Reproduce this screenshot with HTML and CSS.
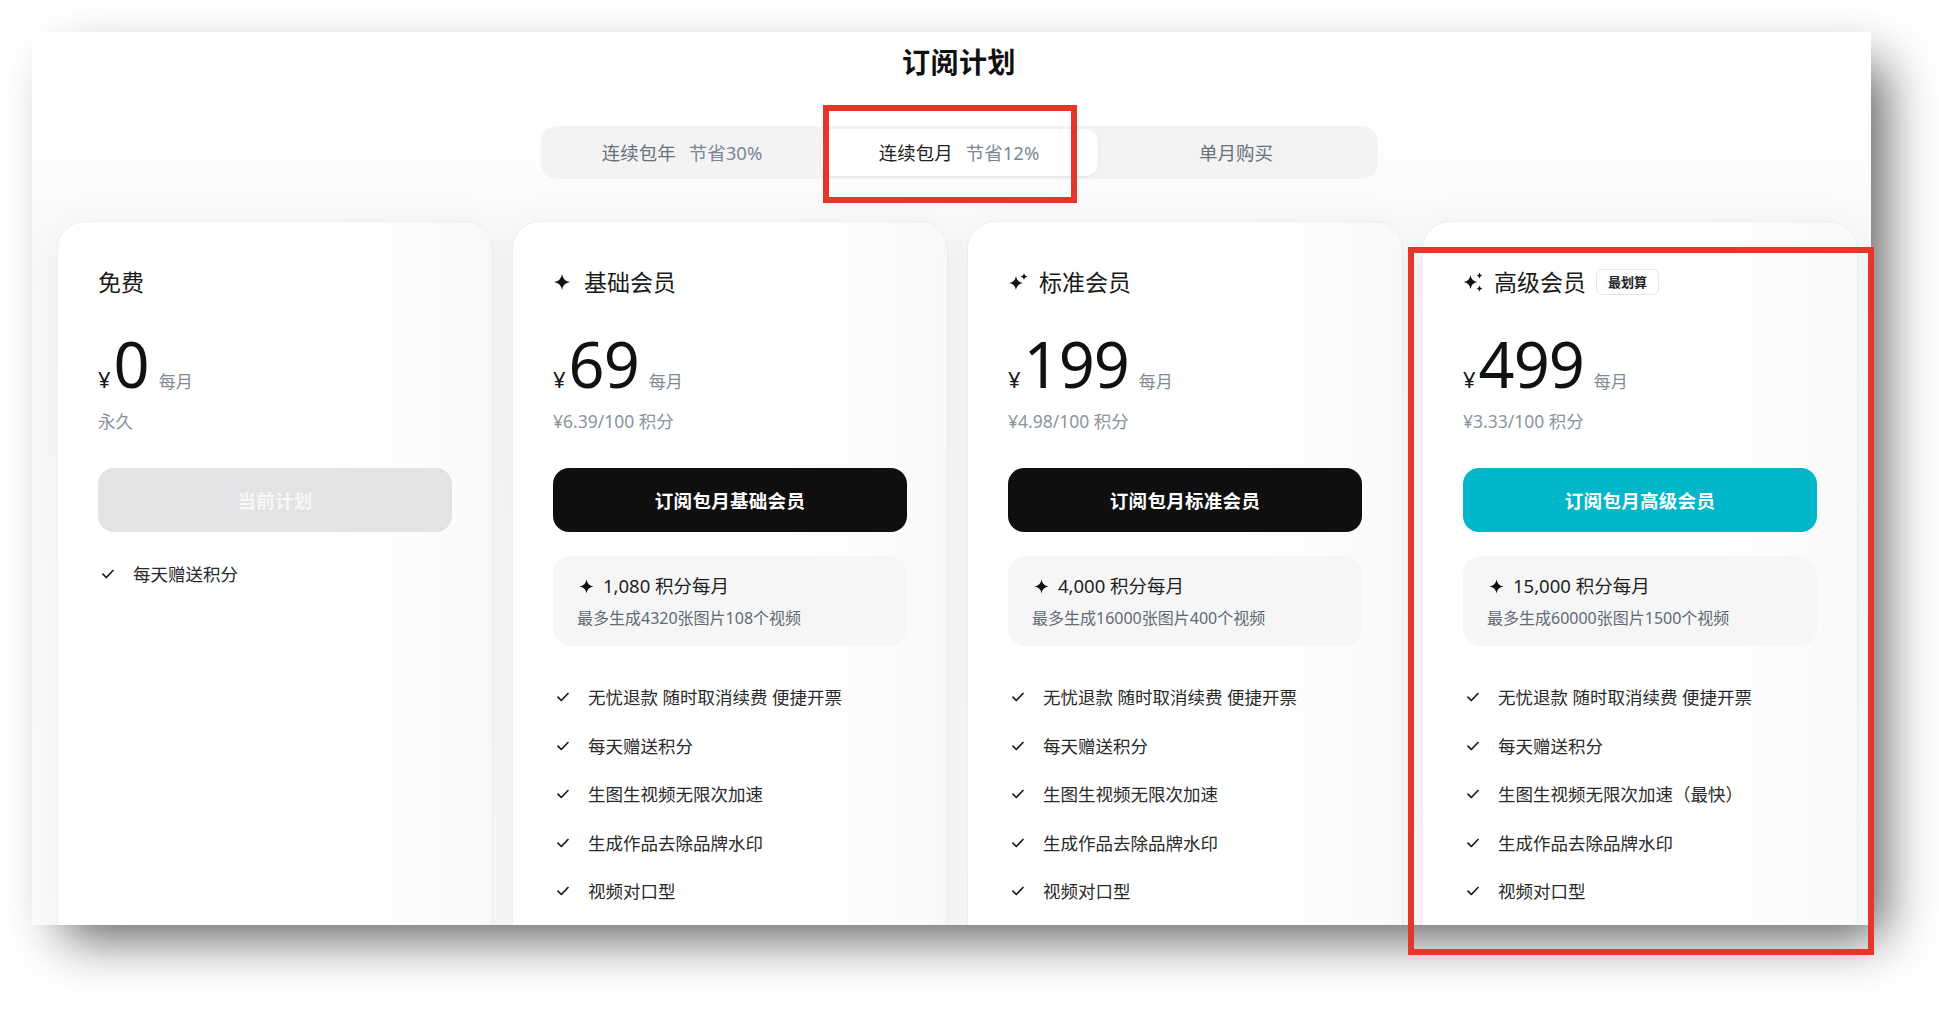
FILE: index.html
```html
<!DOCTYPE html>
<html lang="zh-CN">
<head>
<meta charset="utf-8">
<title>订阅计划</title>
<link rel="stylesheet" href="styles.css">
</head>
<body>
<div class="panel">
  <h1 class="title">订阅计划</h1>
  <div class="tabs">
    <div class="tab"><span class="tab-name">连续包年</span><span class="tab-save">节省30%</span></div>
    <div class="tab active"><span class="tab-name">连续包月</span><span class="tab-save">节省12%</span></div>
    <div class="tab"><span class="tab-name">单月购买</span></div>
  </div>

  <div class="cards">
    <div class="card">
      <div class="plan-head"><span class="plan-name">免费</span></div>
      <div class="price"><span class="cur">¥</span><span class="amount">0</span><span class="per">每月</span></div>
      <div class="unit">永久</div>
      <button class="btn btn-disabled">当前计划</button>
      <ul class="features features-free">
        <li><svg class="check" viewBox="0 0 12 10"><path d="M1 5.2 L4.3 8.5 L11 1.5"/></svg><span>每天赠送积分</span></li>
      </ul>
    </div>

    <div class="card">
      <div class="plan-head">
        <svg class="plan-icon" viewBox="0 0 20 20"><path d="M9 2 Q10 9 17 10 Q10 11 9 18 Q8 11 1 10 Q8 9 9 2Z"/></svg>
        <span class="plan-name">基础会员</span>
      </div>
      <div class="price"><span class="cur">¥</span><span class="amount">69</span><span class="per">每月</span></div>
      <div class="unit">¥6.39/100 积分</div>
      <button class="btn btn-dark">订阅包月基础会员</button>
      <div class="credits">
        <div class="credits-main"><svg class="credit-icon" viewBox="0 0 16 16"><path d="M8 0.5 Q8.9 7.1 15.5 8 Q8.9 8.9 8 15.5 Q7.1 8.9 0.5 8 Q7.1 7.1 8 0.5Z"/></svg><span>1,080 积分每月</span></div>
        <div class="credits-sub">最多生成4320张图片108个视频</div>
      </div>
      <ul class="features">
        <li><svg class="check" viewBox="0 0 12 10"><path d="M1 5.2 L4.3 8.5 L11 1.5"/></svg><span>无忧退款 随时取消续费 便捷开票</span></li>
        <li><svg class="check" viewBox="0 0 12 10"><path d="M1 5.2 L4.3 8.5 L11 1.5"/></svg><span>每天赠送积分</span></li>
        <li><svg class="check" viewBox="0 0 12 10"><path d="M1 5.2 L4.3 8.5 L11 1.5"/></svg><span>生图生视频无限次加速</span></li>
        <li><svg class="check" viewBox="0 0 12 10"><path d="M1 5.2 L4.3 8.5 L11 1.5"/></svg><span>生成作品去除品牌水印</span></li>
        <li><svg class="check" viewBox="0 0 12 10"><path d="M1 5.2 L4.3 8.5 L11 1.5"/></svg><span>视频对口型</span></li>
      </ul>
    </div>

    <div class="card">
      <div class="plan-head">
        <svg class="plan-icon" viewBox="0 0 20 20"><path d="M8 4 Q8.9 10.1 15 11 Q8.9 11.9 8 18 Q7.1 11.9 1 11 Q7.1 10.1 8 4Z"/><path d="M16 1 Q16.5 4 19.5 4.5 Q16.5 5 16 8 Q15.5 5 12.5 4.5 Q15.5 4 16 1Z"/></svg>
        <span class="plan-name">标准会员</span>
      </div>
      <div class="price"><span class="cur">¥</span><span class="amount">199</span><span class="per">每月</span></div>
      <div class="unit">¥4.98/100 积分</div>
      <button class="btn btn-dark">订阅包月标准会员</button>
      <div class="credits">
        <div class="credits-main"><svg class="credit-icon" viewBox="0 0 16 16"><path d="M8 0.5 Q8.9 7.1 15.5 8 Q8.9 8.9 8 15.5 Q7.1 8.9 0.5 8 Q7.1 7.1 8 0.5Z"/></svg><span>4,000 积分每月</span></div>
        <div class="credits-sub">最多生成16000张图片400个视频</div>
      </div>
      <ul class="features">
        <li><svg class="check" viewBox="0 0 12 10"><path d="M1 5.2 L4.3 8.5 L11 1.5"/></svg><span>无忧退款 随时取消续费 便捷开票</span></li>
        <li><svg class="check" viewBox="0 0 12 10"><path d="M1 5.2 L4.3 8.5 L11 1.5"/></svg><span>每天赠送积分</span></li>
        <li><svg class="check" viewBox="0 0 12 10"><path d="M1 5.2 L4.3 8.5 L11 1.5"/></svg><span>生图生视频无限次加速</span></li>
        <li><svg class="check" viewBox="0 0 12 10"><path d="M1 5.2 L4.3 8.5 L11 1.5"/></svg><span>生成作品去除品牌水印</span></li>
        <li><svg class="check" viewBox="0 0 12 10"><path d="M1 5.2 L4.3 8.5 L11 1.5"/></svg><span>视频对口型</span></li>
      </ul>
    </div>

    <div class="card">
      <div class="plan-head">
        <svg class="plan-icon" viewBox="0 0 20 20"><path d="M7.5 3 Q8.4 9.1 14.5 10 Q8.4 10.9 7.5 17 Q6.6 10.9 0.5 10 Q6.6 9.1 7.5 3Z"/><path d="M16.5 0.5 Q16.9 3.1 19.5 3.5 Q16.9 3.9 16.5 6.5 Q16.1 3.9 13.5 3.5 Q16.1 3.1 16.5 0.5Z"/><path d="M16.5 13.5 Q16.9 16.1 19.5 16.5 Q16.9 16.9 16.5 19.5 Q16.1 16.9 13.5 16.5 Q16.1 16.1 16.5 13.5Z"/></svg>
        <span class="plan-name">高级会员</span>
        <span class="badge">最划算</span>
      </div>
      <div class="price"><span class="cur">¥</span><span class="amount">499</span><span class="per">每月</span></div>
      <div class="unit">¥3.33/100 积分</div>
      <button class="btn btn-accent">订阅包月高级会员</button>
      <div class="credits">
        <div class="credits-main"><svg class="credit-icon" viewBox="0 0 16 16"><path d="M8 0.5 Q8.9 7.1 15.5 8 Q8.9 8.9 8 15.5 Q7.1 8.9 0.5 8 Q7.1 7.1 8 0.5Z"/></svg><span>15,000 积分每月</span></div>
        <div class="credits-sub">最多生成60000张图片1500个视频</div>
      </div>
      <ul class="features">
        <li><svg class="check" viewBox="0 0 12 10"><path d="M1 5.2 L4.3 8.5 L11 1.5"/></svg><span>无忧退款 随时取消续费 便捷开票</span></li>
        <li><svg class="check" viewBox="0 0 12 10"><path d="M1 5.2 L4.3 8.5 L11 1.5"/></svg><span>每天赠送积分</span></li>
        <li><svg class="check" viewBox="0 0 12 10"><path d="M1 5.2 L4.3 8.5 L11 1.5"/></svg><span>生图生视频无限次加速（最快）</span></li>
        <li><svg class="check" viewBox="0 0 12 10"><path d="M1 5.2 L4.3 8.5 L11 1.5"/></svg><span>生成作品去除品牌水印</span></li>
        <li><svg class="check" viewBox="0 0 12 10"><path d="M1 5.2 L4.3 8.5 L11 1.5"/></svg><span>视频对口型</span></li>
      </ul>
    </div>
  </div>
</div>

<div class="mark mark-tab"></div>
<div class="mark mark-card"></div>
</body>
</html>
```

FILE: styles.css
```css
* { box-sizing: border-box; }

html, body {
  margin: 0;
  padding: 0;
  background: #ffffff;
}

body {
  width: 1939px;
  height: 1020px;
  position: relative;
  overflow: hidden;
  font-family: "Noto Sans", "Noto Sans CJK SC", sans-serif;
  color: #1a1a1a;
}

.panel {
  margin: 32px 0 0 32px;
  width: 1839px;
  height: 893px;
  padding: 10px 10px 0 25px;
  overflow: hidden;
  background: linear-gradient(180deg, #ffffff 0px, #ffffff 90px, #f8f8f8 230px, #fbfbfb 100%);
  box-shadow: 22px 22px 50px -10px rgba(0, 0, 0, 0.65);
  display: flex;
  flex-direction: column;
  align-items: center;
}

.panel > * { flex-shrink: 0; }

.title {
  margin: 0;
  font-size: 28px;
  line-height: 40px;
  font-weight: 700;
  color: #111;
  letter-spacing: 0.5px;
}

.tabs {
  margin-top: 44px;
  width: 837px;
  height: 53px;
  padding: 3px;
  border-radius: 16px;
  background: #f3f3f3;
  display: flex;
}

.tab {
  flex: 1;
  display: flex;
  align-items: center;
  justify-content: center;
  gap: 13px;
  border-radius: 13px;
  font-size: 18.5px;
  line-height: 24px;
  color: #67717c;
}

.tab .tab-save { color: #7b8793; }

.tab.active {
  background: #ffffff;
  box-shadow: 0 1px 3px rgba(0, 0, 0, 0.06);
}

.tab.active .tab-name { color: #222; }

.cards {
  margin-top: 42px;
  display: flex;
  gap: 19px;
  align-self: stretch;
}

.card {
  width: 436px;
  flex: none;
  min-height: 760px;
  border: 1px solid #ededed;
  border-radius: 28px;
  padding: 47px 40px 0 40px;
  background: linear-gradient(90deg, #ffffff 0%, #ffffff 65%, #f9f9f9 100%);
  box-shadow: 0 0 40px rgba(0, 0, 0, 0.045);
}

.plan-head {
  display: flex;
  align-items: center;
  height: 26px;
}

.plan-icon {
  width: 20px;
  height: 20px;
  fill: #111;
  margin-right: 11px;
  flex: none;
}

.plan-name {
  font-size: 23px;
  line-height: 26px;
  color: #1a1a1a;
}

.badge {
  margin-left: 10px;
  height: 26px;
  padding: 0 11px;
  border: 1px solid #e6e6e6;
  border-radius: 6px;
  font-size: 13px;
  line-height: 24px;
  font-weight: 700;
  color: #222;
  background: #fff;
}

.price {
  margin-top: 37px;
  display: flex;
  align-items: baseline;
  height: 64px;
}

.cur {
  font-size: 22px;
  line-height: 22px;
  color: #1a1a1a;
  margin-right: 3px;
}

.amount {
  font-size: 63px;
  line-height: 64px;
  color: #111;
  letter-spacing: -1px;
}

.per {
  margin-left: 10px;
  font-size: 17px;
  line-height: 22px;
  color: #7f8a95;
}

.unit {
  margin-top: 13px;
  font-size: 17.5px;
  line-height: 24px;
  color: #8a949e;
}

.btn {
  display: block;
  width: 100%;
  margin-top: 35px;
  height: 64px;
  border: 0;
  border-radius: 16px;
  font-family: inherit;
  font-size: 18.5px;
  font-weight: 700;
  color: #ffffff;
  letter-spacing: 0.3px;
}

.btn-dark { background: #0f0f10; }
.btn-accent { background: #00b6c9; }
.btn-disabled { background: #e2e3e5; color: #f7f7f7; }

.credits {
  margin-top: 24px;
  border-radius: 18px;
  background: #f6f6f6;
  padding: 17px 0 17px 24px;
}

.credits-main {
  display: flex;
  align-items: center;
  font-size: 18.5px;
  line-height: 26px;
  color: #1f1f1f;
}

.credit-icon {
  width: 15px;
  height: 15px;
  fill: #111;
  margin: 0 9px 0 2px;
  flex: none;
}

.credits-sub {
  margin-top: 8px;
  font-size: 16px;
  line-height: 22px;
  color: #5f6a75;
}

.features {
  list-style: none;
  margin: 39px 0 0 0;
  padding: 0;
  display: flex;
  flex-direction: column;
  gap: 24.5px;
}

.features-free { margin-top: 30px; }

.features li {
  display: flex;
  align-items: center;
  height: 24px;
  font-size: 17.5px;
  line-height: 24px;
  color: #2a2a2a;
}

.check {
  width: 12px;
  height: 10px;
  margin: 0 19px 0 4px;
  flex: none;
  fill: none;
  stroke: #1a1a1a;
  stroke-width: 1.7;
  stroke-linecap: round;
  stroke-linejoin: round;
}

.mark {
  position: absolute;
  border: 6px solid #e4372a;
  pointer-events: none;
}

.mark-tab {
  left: 823px;
  top: 105px;
  width: 254px;
  height: 98px;
}

.mark-card {
  left: 1408px;
  top: 247px;
  width: 466px;
  height: 708px;
}
```
